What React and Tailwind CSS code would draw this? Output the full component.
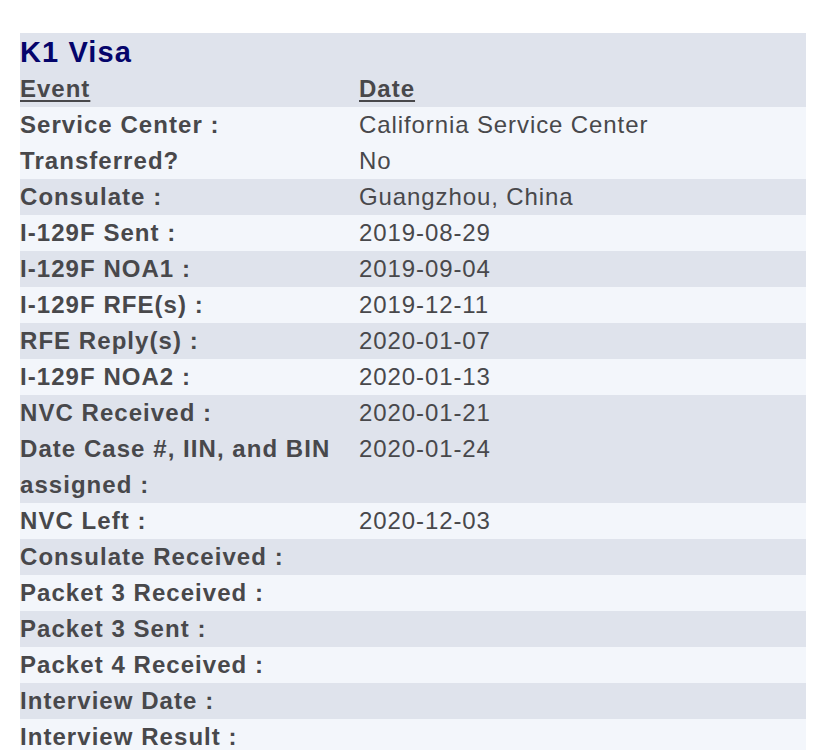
import React from "react";

const rows = [
  { label: "Service Center :", value: "California Service Center", dark: false },
  { label: "Transferred?", value: "No", dark: false },
  { label: "Consulate :", value: "Guangzhou, China", dark: true },
  { label: "I-129F Sent :", value: "2019-08-29", dark: false },
  { label: "I-129F NOA1 :", value: "2019-09-04", dark: true },
  { label: "I-129F RFE(s) :", value: "2019-12-11", dark: false },
  { label: "RFE Reply(s) :", value: "2020-01-07", dark: true },
  { label: "I-129F NOA2 :", value: "2020-01-13", dark: false },
  { label: "NVC Received :", value: "2020-01-21", dark: true },
  { label: "Date Case #, IIN, and BIN assigned :", value: "2020-01-24", dark: true },
  { label: "NVC Left :", value: "2020-12-03", dark: false },
  { label: "Consulate Received :", value: "", dark: true },
  { label: "Packet 3 Received :", value: "", dark: false },
  { label: "Packet 3 Sent :", value: "", dark: true },
  { label: "Packet 4 Received :", value: "", dark: false },
  { label: "Interview Date :", value: "", dark: true },
  { label: "Interview Result :", value: "", dark: false },
];

const App = () => {
  return (
    <div className="min-h-screen bg-white pt-[33px] pl-5 pr-5 font-['Liberation_Sans',Arial,sans-serif] text-[#48484b]">
      <div className="w-[786px]">
        <div className="bg-[#dfe3ec]">
          <h1 className="text-[29px] leading-[38px] font-bold text-[#05056b] tracking-[1.1px]">K1 Visa</h1>
          <div className="flex text-[24px] leading-[36px] font-bold tracking-[1px]">
            <div className="w-[339px] shrink-0">
              <span className="underline underline-offset-[3px] decoration-[2px]">Event</span>
            </div>
            <div>
              <span className="underline underline-offset-[3px] decoration-[2px]">Date</span>
            </div>
          </div>
        </div>
        {rows.map((row) => (
          <div
            key={row.label}
            className={`flex text-[24px] leading-[36px] ${row.dark ? "bg-[#dfe3ec]" : "bg-[#f3f6fb]"}`}
          >
            <div className="w-[339px] shrink-0 pr-1 font-bold tracking-[1.05px]">{row.label}</div>
            <div className="flex-1 tracking-[0.9px]">{row.value}</div>
          </div>
        ))}
      </div>
    </div>
  );
};

export default App;
